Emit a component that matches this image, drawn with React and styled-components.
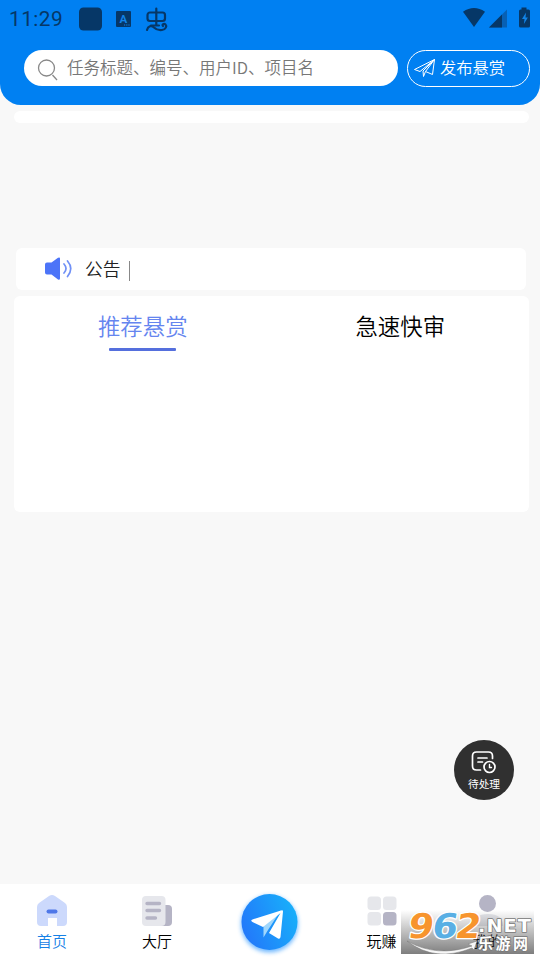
import React from 'react'
import styled, { createGlobalStyle } from 'styled-components'

const GlobalStyle = createGlobalStyle`
  * {
    box-sizing: border-box;
  }

  body {
    margin: 0;
    background-color: #f8f8f8;
    font-family: 'Noto Sans CJK SC', sans-serif;
  }
`

const Screen = styled.div`
  width: 540px;
  height: 960px;
  display: flex;
  flex-direction: column;
  overflow: hidden;
  position: relative;
  background-color: #f8f8f8;
`

const Header = styled.header`
  height: 105px;
  flex: none;
  background-color: #0080f2;
  border-radius: 0 0 21px 21px;
`

const StatusBar = styled.div`
  height: 37px;
  display: flex;
  align-items: center;
  justify-content: space-between;
  padding-left: 9px;
  color: #063767;
`

const Clock = styled.span`
  width: 69px;
  font-family: Roboto, sans-serif;
  font-size: 20.8px;
  line-height: 24px;
  letter-spacing: 0.45px;
`

const StatusGroup = styled.div`
  display: flex;
  align-items: center;

  svg {
    display: block;
  }
`

const SearchRow = styled.div`
  display: flex;
  gap: 9px;
  padding: 13px 10px 0 24px;
`

const SearchBox = styled.div`
  width: 374px;
  height: 36px;
  display: flex;
  align-items: center;
  padding-left: 13px;
  border-radius: 18px;
  background-color: #fff;
  color: #777;
  font-size: 16.5px;
  font-weight: 350;
  line-height: 24px;

  svg {
    margin: 3px 8px 0 0;
  }

  span {
    margin-top: -3px;
  }
`

const PublishButton = styled.button`
  width: 123px;
  height: 37px;
  display: flex;
  align-items: center;
  padding: 0 0 0 5px;
  border: 1px solid #fff;
  border-radius: 19px;
  background: none;
  color: #fff;
  font-family: inherit;
  font-size: 16.3px;
  font-weight: 350;
  line-height: 24px;

  svg {
    margin: -2px 4px 0 0;
  }

  span {
    margin-top: -3px;
  }
`

const Main = styled.main`
  flex: 1;
  padding: 6px 11px 0 14px;
`

const Banner = styled.div`
  height: 12px;
  margin-bottom: 125px;
  border-radius: 6px;
  background-color: #fff;
`

const Notice = styled.div`
  height: 42px;
  display: flex;
  align-items: center;
  margin: 0 3px 6px 2px;
  padding-left: 28px;
  border-radius: 6px;
  background-color: #fff;
  color: #222;
  font-size: 17.7px;
  font-weight: 350;
  line-height: 26px;

  svg {
    margin-right: 13px;
  }

  span {
    margin-top: -2px;
  }
`

const Divider = styled.i`
  width: 1px;
  height: 20px;
  margin: 3px 0 0 9px;
  background-color: #888;
`

const Panel = styled.section`
  height: 216px;
  display: flex;
  border-radius: 6px;
  background-color: #fff;
`

const Tab = styled.div`
  flex: 1;
  display: flex;
  flex-direction: column;
  align-items: center;
  padding-top: 13px;
  color: ${props => (props.$active ? '#6585ef' : '#000')};
  font-size: 22.4px;
  font-weight: 350;
  line-height: 32px;

  &::after {
    content: '';
    width: 67px;
    height: 3px;
    margin-top: 7px;
    border-radius: 1px;
    background-color: ${props => (props.$active ? '#556fdd' : 'transparent')};
  }
`

const Pending = styled.div`
  position: absolute;
  left: 454px;
  top: 740px;
  width: 60px;
  height: 60px;
  display: flex;
  flex-direction: column;
  align-items: center;
  padding-top: 9px;
  border-radius: 50%;
  background-color: #303030;
  color: #fff;
  font-size: 10.7px;
  line-height: 16px;

  span {
    margin-top: 2px;
  }
`

const TabBar = styled.nav`
  height: 76px;
  flex: none;
  display: grid;
  grid-template-columns: 104px 106px 118px 107px 105px;
  background-color: #fff;
`

const TabItem = styled.div`
  display: flex;
  flex-direction: column;
  align-items: center;
  padding-top: 10px;
  color: ${props => (props.$active ? '#1681e6' : '#000')};
  font-size: 15px;
  font-weight: 350;
  line-height: 22px;

  svg {
    flex: none;
    margin-bottom: 3px;
  }
`

const SendItem = styled.div`
  display: flex;
  justify-content: center;
`

const Watermark = styled.div`
  position: absolute;
  left: 401px;
  top: 910px;
  width: 133px;
  height: 44px;
  background: linear-gradient(rgba(40, 40, 40, 0), rgba(40, 40, 40, 0.6));

  svg {
    display: block;
  }
`

const AppIcons = () => (
  <svg width="92" height="28" viewBox="0 0 92 28" fill="none">
    <rect x="1" y="2.500" width="23" height="23" rx="4.500" fill="#063767" />
    <rect x="38" y="6" width="15" height="16" rx="1" fill="#063767" />
    <text x="45.300" y="17.500" textAnchor="middle" fontFamily="Roboto" fontWeight="700" fontSize="11.500" fill="#1183e8">
      A
    </text>
    <path d="M46 20h6" stroke="#1183e8" strokeWidth="1" strokeDasharray="1.2 1" />
    <g stroke="#063767" strokeWidth="2.200" strokeLinecap="round" strokeLinejoin="round">
      <rect x="69.500" y="7.500" width="17.500" height="8.500" rx="2.500" />
      <path d="M78.300 3.500V20M73 20.500h8" />
      <path d="M69 25c1-4 4.500-5 7-2.500s4 3 8 2.500 5-4 3.500-5.500-4 0-2.500 1.500" />
    </g>
  </svg>
)

const DeviceIcons = () => (
  <svg width="80" height="28" viewBox="0 0 80 28">
    <path d="M3 6.700q11-7.500 22 0L14 22z" fill="#063767" />
    <path d="M47 4.500V22.500H29z" fill="#0760b4" />
    <path d="M42 9.500V22.500H29z" fill="#063767" />
    <path d="M61.500 2.500h5v2H68.500q1.500 0 1.500 1.500V21q0 1.500-1.500 1.500h-8q-1.500 0-1.500-1.500V6q0-1.500 1.500-1.500h1z" fill="#063767" />
    <path d="M66 7.500l-4 6.500h2.500l-.6 5 4-6.500H65.500z" fill="#1183e8" />
  </svg>
)

const SearchIcon = () => (
  <svg width="22" height="22" viewBox="0 0 22 22" fill="none" stroke="#888" strokeWidth="1.300">
    <circle cx="9.500" cy="9" r="8" />
    <path d="M15.500 16l4.500 5" />
  </svg>
)

const PlaneIcon = () => (
  <svg width="23" height="20" viewBox="0 0 23 20" fill="none" stroke="#fff" strokeWidth="1" strokeLinejoin="round">
    <path d="M21.500 1.500L1.500 11.500l5.500 2z" />
    <path d="M21.500 1.500L19.500 16.500l-7-3zM21.500 1.500L10 13l.5 5.500 2-5" />
  </svg>
)

const SpeakerIcon = () => (
  <svg width="28" height="26" viewBox="0 0 28 26" fill="none">
    <path d="M3 6.500h4.500L14 1.800q2-1 2 .8v20q0 1.800-2 .8L7.500 18.500H3q-2 0-2-2v-8q0-2 2-2z" fill="#4c74f8" />
    <path d="M20 8q4 4.500 0 9M23.500 5q6.500 7.500 0 15.500" stroke="#7090f6" strokeWidth="1.700" strokeLinecap="round" />
  </svg>
)

const PendingIcon = () => (
  <svg width="26" height="25" viewBox="0 0 26 25" fill="none" stroke="#fff" strokeWidth="1.700" strokeLinecap="round">
    <path d="M9.500 21H5.500q-4 0-4-4V7q0-4 4-4h12q4 0 4 4v2.500" />
    <path d="M7 9h9M7 13h4.500" />
    <circle cx="18.500" cy="18" r="5.500" />
    <path d="M18.500 15.500V18.500h2" strokeWidth="1.400" />
  </svg>
)

const HomeIcon = () => (
  <svg width="32" height="33" viewBox="0 0 32 33">
    <path d="M13 2q3-2 6 0l10 7q2 1.500 2 4v15q0 4-4 4h-6v-8h-9v8H5q-4 0-4-4V13q0-2.500 2-4z" fill="#ccd9fc" />
    <rect x="10.500" y="15.500" width="11" height="4" rx="2" fill="#4f78e8" />
  </svg>
)

const HallIcon = () => (
  <svg width="32" height="33" viewBox="0 0 32 33">
    <path d="M20 11h7q4 0 4 4v13q0 4-4 4h-7z" fill="#b5b4c5" />
    <rect x="1" y="2" width="23.500" height="30" rx="4" fill="#e6e7ec" />
    <path d="M6 9.500h12.500M6 16.500h12.500M6 24h8.500" stroke="#b5b4c5" strokeWidth="3.400" strokeLinecap="round" />
  </svg>
)

const GridIcon = () => (
  <svg width="32" height="33" viewBox="0 0 32 33">
    <rect x="1.500" y="2.500" width="13.500" height="13.500" rx="3.500" fill="#e6e7eb" />
    <rect x="17" y="2.500" width="13.500" height="13.500" rx="3.500" fill="#e6e7eb" />
    <rect x="1.500" y="18" width="13.500" height="13.500" rx="3.500" fill="#e6e7eb" />
    <rect x="17" y="18" width="13.500" height="13.500" rx="3.500" fill="#b5b4c5" />
  </svg>
)

const MineIcon = () => (
  <svg width="32" height="33" viewBox="0 0 32 33">
    <path d="M1 32q0-12 15-12t15 12z" fill="#e6e7ec" />
    <circle cx="15.500" cy="9.500" r="8.500" fill="#b5b4c5" />
  </svg>
)

const SendIcon = () => (
  <svg width="70" height="76" viewBox="0 0 70 76">
    <defs>
      <linearGradient id="send" x1="0" x2="1" y1=".7" y2=".3">
        <stop offset="0" stopColor="#2377fa" />
        <stop offset="1" stopColor="#18b0fa" />
      </linearGradient>
      <filter id="glow" x="-20%" y="-20%" width="140%" height="140%">
        <feGaussianBlur stdDeviation="2" />
      </filter>
    </defs>
    <circle cx="35.500" cy="40" r="28.500" fill="#399dff" opacity=".7" filter="url(#glow)" />
    <circle cx="35.500" cy="38" r="28" fill="url(#send)" />
    <path d="M29.500 42L47 26 34 46l-4.500 7.500z" fill="#a0d7fc" />
    <path d="M47 26.500q2-1 2 1L46.500 53q-.4 2.500-2.500 1.500l-9-5.500L46.500 29 29 43l-10.500-5q-2.500-1.500 0-2.600z" fill="#fff" />
  </svg>
)

const items = [
  { name: '首页', Icon: HomeIcon, active: true },
  { name: '大厅', Icon: HallIcon },
  { name: 'send' },
  { name: '玩赚', Icon: GridIcon },
  { name: '我的', Icon: MineIcon }
]

const SiteMark = () => (
  <Watermark>
    <svg width="133" height="44" viewBox="0 0 133 44">
      <path d="M6 31q30 17 65 5l-4-2 9-3-3 9-2-2Q34 53 6 31z" fill="#f7f7f7" stroke="#777" strokeWidth=".5" />
      <g
        fontFamily="DejaVu Sans"
        fontWeight="700"
        fontSize="34"
        stroke="#fff"
        strokeWidth="2.500"
        strokeLinejoin="round"
        paintOrder="stroke"
        transform="translate(4.500 0) skewX(-9)"
      >
        <text x="5.500" y="27.500" textLength="25.500" lengthAdjust="spacingAndGlyphs" fill="#f7942d">9</text>
        <text x="29.500" y="27.500" textLength="25.500" lengthAdjust="spacingAndGlyphs" fill="#59afe4">6</text>
        <text x="53" y="27.500" textLength="25" lengthAdjust="spacingAndGlyphs" fill="#f7942d">2</text>
      </g>
      <g fill="#fff" stroke="#777" strokeWidth="1.500" strokeLinejoin="round" paintOrder="stroke" fontWeight="700">
        <text x="77" y="22" textLength="54" lengthAdjust="spacingAndGlyphs" fontFamily="DejaVu Sans" fontSize="18" letterSpacing="1">
          .NET
        </text>
        <text x="77" y="39" textLength="50" fontFamily="Noto Sans CJK SC" fontSize="15">乐游网</text>
      </g>
    </svg>
  </Watermark>
)

const App = () => {
  const renderItems = () =>
    items.map(({ name, Icon, active }) =>
      Icon ? (
        <TabItem key={name} $active={active}>
          <Icon />
          {name}
        </TabItem>
      ) : (
        <SendItem key={name}>
          <SendIcon />
        </SendItem>
      )
    )

  return (
    <Screen>
      <GlobalStyle />
      <Header>
        <StatusBar>
          <StatusGroup>
            <Clock>11:29</Clock>
            <AppIcons />
          </StatusGroup>
          <StatusGroup>
            <DeviceIcons />
          </StatusGroup>
        </StatusBar>
        <SearchRow>
          <SearchBox>
            <SearchIcon />
            <span>任务标题、编号、用户ID、项目名</span>
          </SearchBox>
          <PublishButton>
            <PlaneIcon />
            <span>发布悬赏</span>
          </PublishButton>
        </SearchRow>
      </Header>
      <Main>
        <Banner />
        <Notice>
          <SpeakerIcon />
          <span>公告</span>
          <Divider />
        </Notice>
        <Panel>
          <Tab $active>推荐悬赏</Tab>
          <Tab>急速快审</Tab>
        </Panel>
      </Main>
      <TabBar>{renderItems()}</TabBar>
      <Pending>
        <PendingIcon />
        <span>待处理</span>
      </Pending>
      <SiteMark />
    </Screen>
  )
}

export default App
